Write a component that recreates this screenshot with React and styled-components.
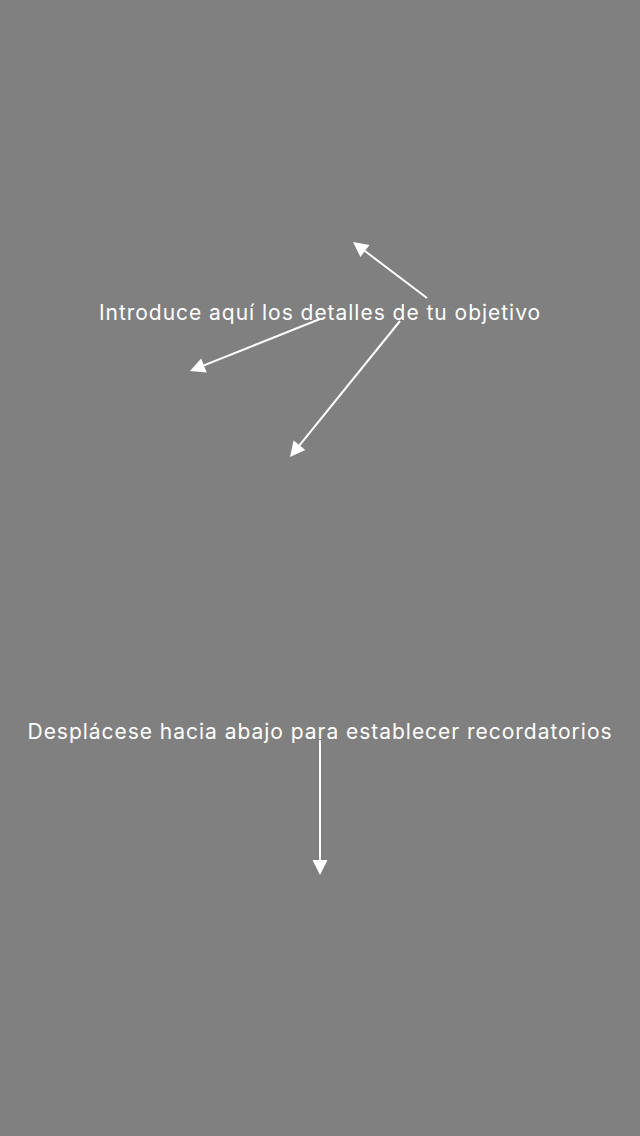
import styled, { createGlobalStyle } from "styled-components";

const Global = createGlobalStyle`
  html, body {
    margin: 0;
    padding: 0;
    background: #808080;
  }
`;

const Overlay = styled.div`
  position: relative;
  width: 640px;
  height: 1136px;
  background: #808080;
  display: flex;
  flex-direction: column;
  align-items: center;
  font-family: Inter, "Noto Sans", sans-serif;
  color: #fff;
  overflow: hidden;
`;

const Hint = styled.p`
  margin: 0;
  margin-top: ${(p) => p.$top}px;
  font-size: 21px;
  line-height: 26px;
  letter-spacing: 0.97px;
  white-space: nowrap;
`;

const Arrows = styled.svg`
  position: absolute;
  inset: 0;
  pointer-events: none;
`;

const arrows = [
  { x1: 427, y1: 298, x2: 353, y2: 242 },
  { x1: 320, y1: 319, x2: 190, y2: 371 },
  { x1: 400, y1: 321, x2: 290, y2: 457 },
  { x1: 320, y1: 740, x2: 320, y2: 875 },
];

const Arrow = ({ x1, y1, x2, y2 }) => {
  const dx = x2 - x1;
  const dy = y2 - y1;
  const len = Math.hypot(dx, dy);
  const ux = dx / len;
  const uy = dy / len;
  const head = 15;
  const half = 7.5;
  const bx = x2 - ux * head;
  const by = y2 - uy * head;
  const pts = `${x2},${y2} ${bx - uy * half},${by + ux * half} ${bx + uy * half},${by - ux * half}`;
  return (
    <g>
      <line x1={x1} y1={y1} x2={bx} y2={by} stroke="#fff" strokeWidth="2" />
      <polygon points={pts} fill="#fff" />
    </g>
  );
};

export default function App() {
  return (
    <>
      <Global />
      <Overlay>
        <Hint $top={300}>Introduce aquí los detalles de tu objetivo</Hint>
        <Hint $top={393}>Desplácese hacia abajo para establecer recordatorios</Hint>
        <Arrows width="640" height="1136" viewBox="0 0 640 1136">
          {arrows.map((a, i) => (
            <Arrow key={i} {...a} />
          ))}
        </Arrows>
      </Overlay>
    </>
  );
}
